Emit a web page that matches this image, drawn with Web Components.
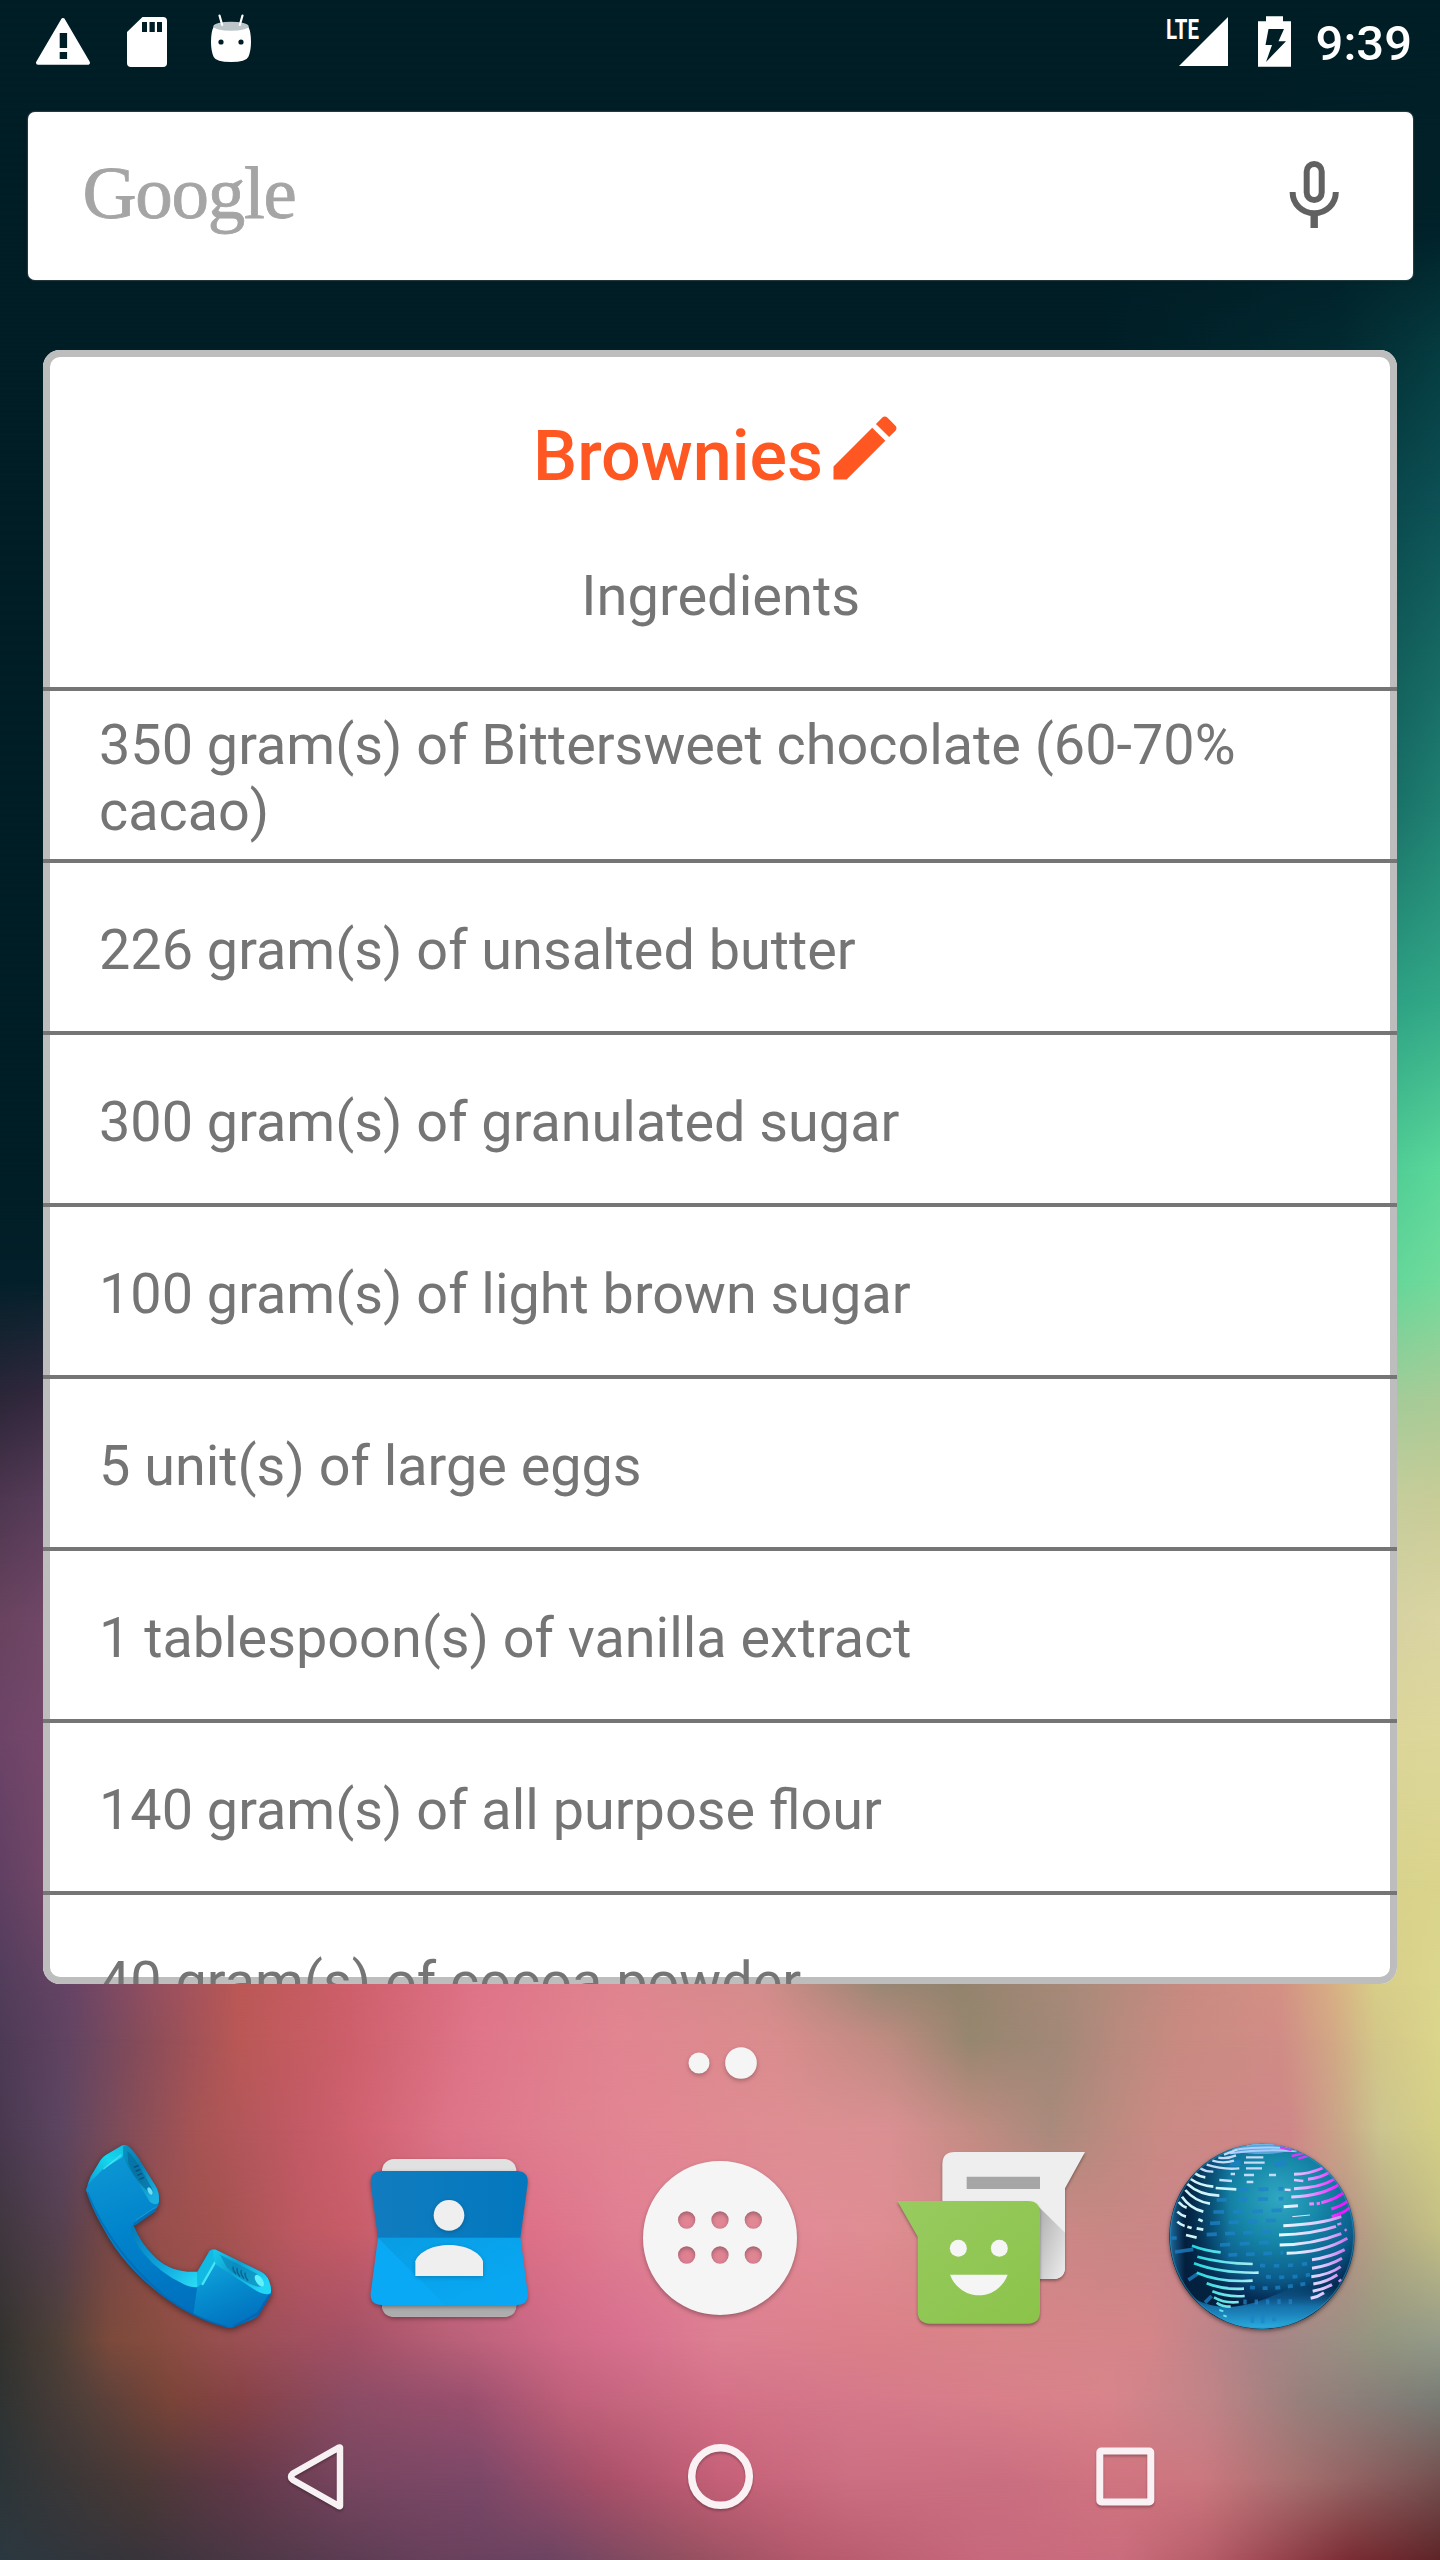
<!DOCTYPE html>
<html lang="en">
<head>
<meta charset="utf-8">
<title>Home screen</title>
<style>
html,body{margin:0;padding:0}
body{width:1440px;height:2560px;overflow:hidden;background:#001e26;font-family:Roboto,"Liberation Sans",sans-serif}
</style>
</head>
<body>
<home-screen></home-screen>
<script>
const define = (name, html, setup) => {
  const tpl = document.createElement('template');
  tpl.innerHTML = html;
  customElements.define(name, class extends HTMLElement {
    constructor() {
      super();
      const root = this.attachShadow({ mode: 'open' });
      root.append(tpl.content.cloneNode(true));
      if (setup) setup(root, this);
    }
  });
};

// Wallpaper: horizontal colour ramps, each fading in over the one above it.
const ramps = [
  [0, '#001e26 0,#001e26 1440px'],
  [230, '#001e26 0,#001e26 1250px,#01222a 1440px'],
  [350, '#001e26 0,#001e26 1100px,#022a31 1340px,#053c40 1440px'],
  [500, '#001e26 0,#001e26 900px,#0a4a4e 1400px,#0d5055 1440px'],
  [800, '#001e26 0,#001e26 400px,#1a7268 1400px,#1f7f71 1440px'],
  [1000, '#001e26 0,#001e26 400px,#2ea284 1400px,#32a887 1440px'],
  [1170, '#001e26 0,#001e26 400px,#52cf96 1400px,#5ad89a 1440px'],
  [1280, '#03202a 0,#03202a 400px,#66d79a 1400px,#70db9b 1440px'],
  [1400, '#2d2639 0,#35293f 43px,#a5cb98 1400px,#a9cb96 1440px'],
  [1500, '#4e3750 0,#573c59 43px,#c6cd9b 1400px,#c8cc97 1440px'],
  [1620, '#69435f 0,#704767 43px,#d8d2a2 1400px,#dad5a3 1440px'],
  [1740, '#6d4468 0,#75486b 43px,#dcd699 1400px,#ddd79a 1440px'],
  [1880, '#604063 0,#704667 43px,#d8d38c 1400px,#dad48d 1440px'],
  [1984, '#523d5b 0,#674466 70px,#934f60 150px,#bb5856 240px,#ce5f6b 350px,#df7388 475px,#e08490 620px,#d48d8b 760px,#9a8774 880px,#93836d 960px,#ad8b7b 1090px,#c98a82 1190px,#d49184 1280px,#d8b184 1335px,#d8cd88 1375px,#dbd68e 1440px'],
  [2040, '#4d3a55 0,#624462 70px,#8b4d59 150px,#ba5856 240px,#cd5f6b 350px,#df7589 475px,#e28591 620px,#d98d8d 780px,#bd8b80 890px,#96866f 970px,#a28878 1060px,#b98a7e 1120px,#c98a82 1180px,#d08c86 1280px,#d2a985 1335px,#d3c688 1375px,#dbd58b 1440px'],
  [2130, '#493850 0,#5c4560 60px,#844d58 130px,#a85454 200px,#c25a65 300px,#d16271 360px,#dd7488 450px,#e08090 560px,#e38693 640px,#dd8f92 810px,#da9092 890px,#c08c82 980px,#a98a7c 1050px,#bc8a80 1110px,#ca8a84 1160px,#cf8788 1290px,#c9a987 1345px,#cbc48f 1380px,#d4cf86 1440px'],
  [2230, '#40373f 0,#554050 60px,#714648 100px,#984f4c 160px,#a35250 220px,#bd5962 300px,#c65c67 345px,#d26a80 450px,#de7289 540px,#e07f92 620px,#e18c96 820px,#df8d92 880px,#cf8887 1000px,#c88784 1110px,#cc8589 1200px,#ce8a88 1290px,#b99286 1345px,#b5aa84 1385px,#c4c084 1440px'],
  [2340, '#33322f 0,#4f4038 60px,#7c4a3c 110px,#854c3e 150px,#984f4f 220px,#a14f5f 300px,#a35065 350px,#b86078 450px,#d06a88 560px,#d8708f 630px,#dd7f92 720px,#db8088 880px,#d88489 1000px,#d48588 1150px,#a88488 1265px,#939680 1380px,#949a88 1440px'],
  [2400, '#2f3332 0,#54403a 90px,#7a4438 170px,#864246 240px,#8b4c65 350px,#9a4f6e 470px,#c0607a 570px,#d37188 720px,#d5788a 850px,#d87f8a 1000px,#d8848c 1110px,#c08488 1210px,#98807c 1300px,#787c75 1440px'],
  [2480, '#2d3538 0,#4b3936 140px,#623848 240px,#784660 350px,#7c4868 480px,#a84f68 600px,#c56078 720px,#cc6f82 850px,#c96e80 1000px,#d07480 1110px,#cc7880 1200px,#a87070 1290px,#745050 1440px'],
  [2560, '#2b3840 0,#38343a 140px,#4f3848 260px,#68405c 430px,#6c4462 550px,#94505f 690px,#b4586c 800px,#c8687c 980px,#cb6c7c 1120px,#b55c68 1210px,#7a2c34 1350px,#5e2528 1440px']
];
define('wall-paper', `
<style>:host{display:block;position:absolute;inset:0;overflow:hidden;z-index:-1}div{position:absolute;left:0;right:0;bottom:0}</style>`,
  root => ramps.forEach(([y, stops], i) => {
    const d = document.createElement('div');
    const top = i ? ramps[i - 1][0] : 0;
    d.style.top = top + 'px';
    d.style.background = `linear-gradient(90deg,${stops})`;
    if (i) d.style.maskImage = `linear-gradient(180deg,transparent 0,#000 ${y - top}px)`;
    root.append(d);
  }));

define('status-bar', `
<style>
:host{display:flex;justify-content:space-between;height:84px;color:#fff}
div{display:flex}
svg{display:block}
.time{font-size:49px;font-weight:500;line-height:84px;padding:2px 28px 0 23px}
</style>
<div>
<svg width="270" height="84" viewBox="0 0 270 84">
 <path d="M63 20 88 62.7H38Z" fill="#fff" stroke="#fff" stroke-width="4" stroke-linejoin="round"/>
 <path d="M59.7 33h7.4v15h-7.4zM59.7 52h7.4v7h-7.4z" fill="#001e26"/>
 <path d="M142.500 17H163q4 0 4 4v42q0 4-4 4h-32q-4 0-4-4V32Z" fill="#fff"/>
 <path d="M142 22h5v10h-5zM149.500 22h5.300v10h-5.300zM157 22h5v10h-5z" fill="#001e26"/>
 <path d="M213.500 27Q231 33 248.500 27 251 32 251 42 251 51 248.300 57 246 62 231 62 216 62 213.700 57 211 51 211 42 211 32 213.500 27Z" fill="#fff"/>
 <ellipse cx="231" cy="26.200" rx="17.600" ry="4.500" fill="#bcc6c8"/>
 <path d="M219.500 15.500 222.200 25M242.500 15.500 239.800 25" stroke="#fff" stroke-width="2.200" stroke-linecap="round"/>
 <circle cx="221" cy="42" r="2.600" fill="#001e26"/><circle cx="241" cy="42" r="2.600" fill="#001e26"/>
</svg>
</div>
<div>
<svg width="130" height="84" viewBox="1162 0 130 84">
 <text x="1165" y="38.600" font-size="28.500" font-weight="700" textLength="33" lengthAdjust="spacingAndGlyphs" fill="#fff">LTE</text>
 <path d="M1178 66H1227V17Z" fill="#fff"/>
 <path d="M1257 21.300h8V16.300h17v5h8V66.700h-33Z" fill="#fff"/>
 <path d="M1267.500 29H1283l-5.500 12.300H1285L1265 62l6-17h-6.500Z" fill="#001e26"/>
</svg>
<span class="time">9:39</span>
</div>`);

define('search-bar', `
<style>
:host{display:flex;align-items:flex-start;justify-content:space-between;box-sizing:border-box;margin:27.500px 27.500px 0;height:168.500px;background:#fff;border-radius:7px;box-shadow:0 0 2px rgba(255,255,255,.5),0 1px 3px rgba(0,0,0,.3);padding:0 74px 0 55px}
.logo{font:75px/86px "Liberation Serif",serif;letter-spacing:-1.300px;color:#a5a5a5;-webkit-text-stroke:.8px #a5a5a5;margin-top:38px}
svg{display:block;margin-top:48.500px}
</style>
<span class="logo">Google</span>
<svg width="50" height="70" viewBox="1289 160 50 70" fill="none" stroke="#616161" stroke-width="6">
 <rect x="1306.700" y="164" width="15" height="36" rx="7.500"/>
 <path d="M1292.600 192C1292.600 204 1302.200 213.200 1314.200 213.200S1335.800 204 1335.800 192"/><path d="M1314.200 213v15" stroke-width="7.400"/>
</svg>`);

define('ingredient-row', `
<style>:host{display:flex;align-items:center;box-sizing:border-box;flex:none;height:172px;border-top:4px solid #757575;padding:6px 110px 0 56px;font-size:55.780px;line-height:66px;color:#757575}</style>
<span><slot></slot></span>`);

define('recipe-card', `
<style>
:host{display:flex;flex-direction:column;height:1634px;margin:70px 43px 0;overflow:hidden;border-radius:17px;background:#fff;box-shadow:inset 0 0 0 7px #bdbdbd}
header{display:flex;flex-direction:column;align-items:center;box-sizing:border-box;flex:none;height:337px;padding-top:56px}
.title{display:flex;height:91px;color:#ff5722;font-size:70px;font-weight:500;line-height:82px}
.title span{padding-top:9px}
svg{display:block}
.sub{margin:66px 0 0 1.500px;font-size:56px;line-height:66px;color:#757575}
</style>
<header>
 <div class="title"><span><slot name="title"></slot></span>
 <svg width="84" height="84" viewBox="0 0 24 24" fill="#ff5722"><path d="M3 17.250V21h3.750L17.810 9.940l-3.750-3.750L3 17.250zM20.710 7.040c.39-.39.39-1.020 0-1.410l-2.340-2.340c-.39-.39-1.020-.39-1.410 0l-1.830 1.830 3.750 3.750 1.830-1.830z"/></svg></div>
 <div class="sub"><slot name="subtitle"></slot></div>
</header>
<slot></slot>`);

define('page-dots', `
<style>:host{display:flex;justify-content:center;height:90px;margin-top:36px}svg{display:block;overflow:visible;filter:drop-shadow(0 2px 2px rgba(0,0,0,.25))}</style>
<svg width="200" height="90" viewBox="0 0 600 270" fill="#f5f5f5"><circle cx="237" cy="129" r="31.500"/><circle cx="363" cy="129" r="47.500"/></svg>`);

define('app-phone', `
<style>:host{display:block}svg{display:block;filter:drop-shadow(0 2px 3px rgba(0,0,0,.45))}</style>
<svg width="240" height="240" viewBox="0 0 720 720">
<defs>
<linearGradient id="b" x1="0" y1="0" x2=".35" y2="1"><stop offset="0" stop-color="#109bd6"/><stop offset=".5" stop-color="#0083cb"/><stop offset="1" stop-color="#006fbd"/></linearGradient>
<linearGradient id="t" x1="0" y1="1" x2="1" y2="0"><stop offset="0" stop-color="#0a9dd6"/><stop offset=".6" stop-color="#14d8ee"/><stop offset="1" stop-color="#12bce0"/></linearGradient>
<linearGradient id="e" x1="0" y1="0" x2=".7" y2="1"><stop offset="0" stop-color="#0796c4"/><stop offset=".45" stop-color="#077fb4"/><stop offset="1" stop-color="#1cb0e0"/></linearGradient>
<linearGradient id="n" x1="0" y1="0" x2="1" y2="1"><stop offset="0" stop-color="#0579b8"/><stop offset=".55" stop-color="#0fa5dd"/><stop offset="1" stop-color="#2be0f8"/></linearGradient>
<linearGradient id="f" x1="0" y1="0" x2="1" y2=".6"><stop offset="0" stop-color="#18cdec"/><stop offset=".45" stop-color="#0e9fd0"/><stop offset="1" stop-color="#22d6f6"/></linearGradient>
<linearGradient id="g" x1="0" y1="0" x2=".5" y2="1"><stop offset="0" stop-color="#14a8de"/><stop offset=".5" stop-color="#058cce"/><stop offset="1" stop-color="#0272bf"/></linearGradient>
</defs>
<path d="M78 240 92 200 122 150Q128 141 138 135L185 107Q196 102 206 110 220 122 235 145L288 230Q298 246 297 272 297 290 286 298L236 336 220 345Q240 400 290 447 340 490 412 485L448 424Q456 415 468 419L600 484Q620 494 627 512 636 535 633 555L598 612Q592 622 580 627L520 652Q510 656 498 652 400 625 310 560 190 470 130 355 95 295 78 240Z" fill="url(#b)"/>
<path d="M220 345Q240 400 290 447 340 490 412 485L418 530Q400 536 370 522 300 490 250 430 215 385 212 350Z" fill="url(#n)"/>
<path d="M82 226 92 200 122 150Q128 141 138 135L185 107 196 105 187 142 130 176Z" fill="url(#t)"/>
<path d="M130 178 184 134" stroke="#62e4f5" stroke-width="4" opacity=".7"/>
<path d="M190 108Q198 103 206 110 220 122 235 145L288 230Q298 246 297 276 290 290 270 276L205 172Q184 136 190 108Z" fill="url(#e)"/>
<path d="M202 122Q225 140 274 232 286 260 268 248 230 220 205 160Z" fill="#066d9e" opacity=".7"/>
<path d="M222 172l14-6M227 184l14-6M232 196l14-6M238 208l14-6" stroke="#054f7d" stroke-width="4"/>
<ellipse cx="270" cy="243" rx="6" ry="12" transform="rotate(-28 270 243)" fill="#6ce0f6"/>
<path d="M224 342 284 300" stroke="#0570b4" stroke-width="9" stroke-linecap="round"/>
<path d="M228 330 286 292" stroke="#1c9ad6" stroke-width="3"/>
<path d="M412 530 464 458 628 552 580 627 520 652Q450 640 400 612Z" fill="url(#g)"/>
<path d="M412 530Q410 505 412 485L448 424Q456 415 468 419L466 456 430 520Z" fill="#12b9e3"/>
<path d="M466 456 428 522" stroke="#45e6f7" stroke-width="7" stroke-linecap="round"/>
<path d="M460 420Q466 417 474 422L600 484Q620 494 627 512 636 535 632 550 620 558 590 543L470 466Q458 450 460 420Z" fill="url(#f)"/>
<path d="M480 434 588 490Q612 510 604 530 570 534 500 472Z" fill="#0a7fb4" opacity=".6"/>
<path d="M520 470q-4 8 8 22M532 474q-4 10 8 26M544 480q-4 10 8 26M556 488q-4 8 8 24" fill="none" stroke="#07618c" stroke-width="4"/>
<ellipse cx="598" cy="512" rx="10" ry="20" transform="rotate(-35 598 512)" fill="#62f0fb"/>
<path d="M628 556 594 610 520 650" fill="none" stroke="#0661ad" stroke-width="7" opacity=".7"/>
<path d="M82 248Q150 420 310 556 400 625 500 650" fill="none" stroke="#0664ae" stroke-width="6" opacity=".6"/>
</svg>`);

define('app-contacts', `
<style>:host{display:block}svg{display:block;overflow:visible}.s{filter:drop-shadow(0 6px 6px rgba(0,0,0,.35))}</style>
<svg width="220" height="240" viewBox="0 -60 660 720">
<defs><linearGradient id="a"><stop offset="0" stop-color="#117cbf"/><stop offset="1" stop-color="#0378be"/></linearGradient>
<linearGradient id="c" x1="0" y1="0" x2="1" y2="1"><stop offset="0" stop-color="#089ce2"/><stop offset="1" stop-color="#07a5ef" stop-opacity=".3"/></linearGradient></defs>
<rect class="s" x="126" y="87" width="403" height="473" rx="36" fill="#e1e1e1"/>
<path d="M126 500H529V524Q529 560 493 560H162Q126 560 126 524Z" fill="#adadad"/>
<g class="s">
<path d="M92 160Q90 123 126 123H530Q566 123 563 160L541 324H114Z" fill="url(#a)"/>
<path d="M114 323H541L563 490Q566 525 530 525H126Q90 525 92 490Z" fill="#0aa9f6"/></g>
<path d="M114 324H541L563 490Q566 525 530 525H315Z" fill="url(#c)"/>
<g fill="#efefef" style="filter:drop-shadow(0 4px 6px rgba(0,0,0,.2))"><circle cx="327" cy="256" r="46"/><path d="M226 438V394C236 365 280 345 327 345S419 365 429 394V438Z"/></g>
</svg>`);

define('app-drawer', `
<style>:host{display:block}svg{display:block;overflow:visible;filter:drop-shadow(0 2px 2px rgba(0,0,0,.3))}</style>
<svg width="200" height="240" viewBox="0 270 600 720">
<path fill="#f5f5f5" fill-rule="evenodd" d="M69 654a231 231 0 1 0 462 0a231 231 0 1 0-462 0ZM174 600a26 26 0 1 0 52 0a26 26 0 1 0-52 0ZM274 600a26 26 0 1 0 52 0a26 26 0 1 0-52 0ZM374 600a26 26 0 1 0 52 0a26 26 0 1 0-52 0ZM174 705a26 26 0 1 0 52 0a26 26 0 1 0-52 0ZM274 705a26 26 0 1 0 52 0a26 26 0 1 0-52 0ZM374 705a26 26 0 1 0 52 0a26 26 0 1 0-52 0Z"/>
</svg>`);

define('app-messenger', `
<style>:host{display:block}svg{display:block;overflow:visible}.s{filter:drop-shadow(0 6px 5px rgba(0,0,0,.35))}</style>
<svg width="230" height="240" viewBox="0 -30 690 720">
<defs><linearGradient id="g" x1="0" y1="0" x2="1" y2="1"><stop offset="0" stop-color="#98cb60"/><stop offset="1" stop-color="#8bc34a"/></linearGradient>
<linearGradient id="h" x1="0" y1="0" x2="1" y2="1"><stop offset="0" stop-color="#aaa"/><stop offset="1" stop-color="#eee"/></linearGradient></defs>
<path class="s" d="M187 133Q187 96 224 96H615L555 205V440Q555 477 518 477H187Z" fill="#eee"/>
<path d="M470 254 555 338V440Q555 477 518 477H470Z" fill="url(#h)"/>
<path d="M260 170H480V207H260Z" fill="#a6a6a6"/>
<path class="s" d="M52 243H444Q480 243 480 280V574Q480 611 444 611H150Q113 611 113 574V350Z" fill="url(#g)"/>
<circle cx="235" cy="385" r="25.500" fill="#f5f5f5"/><circle cx="358" cy="385" r="25.500" fill="#f5f5f5"/>
<path d="M210 464H383C368 503 335 526 297 526S225 503 210 464Z" fill="#f5f5f5"/>
</svg>`);

define('app-globe', `
<style>:host{display:block}svg{display:block;overflow:visible}.o{filter:drop-shadow(0 5px 6px rgba(0,0,0,.5))}</style>
<svg width="230" height="240" viewBox="0 -30 690 720" fill="none">
<defs>
<radialGradient id="o" cx="386" cy="235" r="350" gradientUnits="userSpaceOnUse"><stop offset="0" stop-color="#31a7c2"/><stop offset=".35" stop-color="#1688a9"/><stop offset=".68" stop-color="#0b5e8c"/><stop offset=".86" stop-color="#05305a"/><stop offset="1" stop-color="#021c38"/></radialGradient>
<linearGradient id="u" x1="0" y1="500" x2="0" y2="632" gradientUnits="userSpaceOnUse"><stop offset="0" stop-color="#1269a3" stop-opacity="0"/><stop offset=".45" stop-color="#1a80bd" stop-opacity=".85"/><stop offset="1" stop-color="#2cb4e6"/></linearGradient>
<linearGradient id="l" x1="60" x2="240" y1="0" y2="0" gradientUnits="userSpaceOnUse"><stop offset="0" stop-color="#1d6a9c"/><stop offset=".25" stop-color="#041f3d" stop-opacity=".95"/><stop offset="1" stop-color="#04304d" stop-opacity="0"/></linearGradient>
<linearGradient id="r" x1="390" x2="570" y1="0" y2="0" gradientUnits="userSpaceOnUse"><stop offset="0" stop-color="#e6eeff"/><stop offset=".45" stop-color="#e2a5ff"/><stop offset="1" stop-color="#f218ff"/></linearGradient>
<linearGradient id="q" x1="390" x2="600" y1="0" y2="0" gradientUnits="userSpaceOnUse"><stop offset="0" stop-color="#e8fbff"/><stop offset=".6" stop-color="#dccaff"/><stop offset="1" stop-color="#c66bea"/></linearGradient>
<linearGradient id="k" x1="130" x2="320" y1="0" y2="0" gradientUnits="userSpaceOnUse"><stop offset="0" stop-color="#1fd8e0"/><stop offset="1" stop-color="#b4edf4"/></linearGradient>
<clipPath id="p"><circle cx="336" cy="349" r="277"/></clipPath>
</defs>
<circle class="o" cx="336" cy="349" r="278" fill="url(#o)"/>
<g clip-path="url(#p)">
<rect x="50" y="60" width="200" height="580" fill="url(#l)"/>
<path d="M110 520Q200 590 336 540T575 420L620 640H100Z" fill="url(#u)"/>
<ellipse cx="336" cy="82" rx="95" ry="20" fill="#5ba5da"/>
<g stroke="#1e83c9" stroke-width="11" opacity=".75">
<path d="M200 240 400 236" stroke-dasharray="30 32"/><path d="M265 210 400 206" stroke-dasharray="30 30"/>
<path d="M190 276Q300 276 400 270" stroke-dasharray="32 26"/><path d="M180 310Q300 305 395 300" stroke-dasharray="30 26"/><path d="M170 344Q280 338 385 334" stroke-dasharray="30 24"/><path d="M210 375Q300 370 385 366" stroke-dasharray="30 28"/><path d="M235 405Q320 402 400 398" stroke-dasharray="26 26"/>
<path d="M330 436Q400 440 480 430" stroke-dasharray="16 26"/><path d="M348 470Q410 476 480 464" stroke-dasharray="15 25"/><path d="M300 502Q380 510 470 490" stroke-dasharray="15 23"/><path d="M280 546Q360 546 440 545" stroke-width="15" stroke-dasharray="10 24"/>
<path d="M75 396 130 388M115 480 142 462M165 548 185 528M65 354H80M307 588V608M338 584V610M372 592V604"/>
<path d="M240 130H272M373 134 408 128" stroke-width="18"/>
</g>
<g stroke="#a9cfff" stroke-width="6"><path d="M290 76Q340 68 400 76M262 88Q340 78 420 86M240 100Q340 86 440 94"/></g>
<path d="M370 72 400 76M390 82 425 90M425 108 460 100M445 116 480 106" stroke="#d43df5" stroke-width="7"/>
<g stroke="#c5daf7" stroke-width="7">
<path d="M222 104 262 88M205 113Q230 118 258 106M187 122Q220 132 252 122M170 134Q220 150 268 145M150 145Q168 156 190 155M288 112H340M282 128H344M288 145H336M282 165H312M357 165H378M290 186H310M242 162H255M208 180 246 183"/>
</g>
<g stroke="#cef4fa" stroke-width="8">
<path d="M135 160Q148 170 166 172M122 177Q150 197 190 200M197 204 259 208M112 192Q150 226 208 227M106 210Q135 244 180 251M96 230Q120 265 160 275M86 246Q98 260 110 263M82 275Q94 287 108 290M82 305Q92 315 104 318M145 298 158 304M140 325 160 329M108 345 140 353M112 320 125 324"/>
</g>
<g stroke="url(#k)" stroke-width="8">
<path d="M126 377Q165 392 212 397"/><path d="M142 410Q215 430 308 432"/><path d="M132 430Q210 460 326 458"/><path d="M140 458Q210 488 308 482"/><path d="M170 490Q220 510 282 506"/><path d="M187 514Q230 532 284 528"/><path d="M192 532Q225 551 266 546"/><path d="M200 548Q215 560 242 560"/><path d="M208 570 220 574M220 586 230 590" stroke-width="6"/>
</g>
<g stroke="url(#r)" stroke-width="9">
<path d="M432 163Q475 163 518 144"/><path d="M474 178Q512 174 538 157"/><path d="M432 180 460 183M404 209 422 210" stroke-width="7"/><path d="M432 206Q510 204 554 177"/><path d="M424 231Q520 228 572 190"/><path d="M478 252 492 251M500 251 510 250"/><path d="M514 248Q560 238 588 212"/><path d="M544 267Q580 256 596 240"/><path d="M545 290Q585 278 600 262"/>
</g>
<g stroke="url(#q)" stroke-width="9">
<path d="M401 260 444 257"/><path d="M427 290 480 285" stroke-width="3"/><path d="M400 317Q510 313 574 290"/><path d="M387 345Q490 342 558 319"/><path d="M389 375Q490 374 574 341"/><path d="M410 400Q520 398 592 355"/><path d="M486 419Q540 412 584 389"/><path d="M486 445Q540 437 576 415"/><path d="M484 470Q540 464 572 440"/><path d="M490 492Q530 486 562 464"/><path d="M488 514Q520 508 546 494"/><path d="M482 535Q505 530 522 518"/><path d="M562 314 574 310M584 332 590 328M566 485 574 478" stroke-width="7"/>
</g>
<circle cx="336" cy="349" r="275" stroke="#2a9ac4" stroke-width="4" opacity=".5"/>
</g>
</svg>`);

define('app-dock', `
<style>:host{display:flex;justify-content:space-between;height:240px;padding:0 60px}.side{display:flex;gap:40px}</style>
<div class="side"><app-phone></app-phone><app-contacts></app-contacts></div>
<app-drawer></app-drawer>
<div class="side"><app-messenger></app-messenger><app-globe></app-globe></div>`);

define('nav-bar', `
<style>:host{display:flex;justify-content:space-between;align-items:center;height:168px;margin-top:42px;padding:0 275px}svg{display:block;filter:drop-shadow(0 2px 1px rgba(0,0,0,.25))}</style>
<svg width="80" height="80" viewBox="0 0 80 80" fill="none" stroke="#f8f1f4" stroke-width="6.500" stroke-linejoin="round"><path d="M65 11.500V70Q64 70.500 63 69.500L18 44Q14 41 18 37.500L63 12Z"/></svg>
<svg width="80" height="80" viewBox="0 0 80 80" fill="none" stroke="#f9f1f4" stroke-width="7.500"><circle cx="40.500" cy="40.500" r="28.800"/></svg>
<svg width="80" height="80" viewBox="0 0 80 80" fill="none" stroke="#f9f1f4" stroke-width="7"><rect x="14.800" y="15" width="51" height="51" rx="1.500"/></svg>`);

define('home-screen', `
<style>:host{display:flex;flex-direction:column;position:relative;z-index:0;width:1440px;height:2560px;overflow:hidden}</style>
<wall-paper></wall-paper>
<status-bar></status-bar>
<search-bar></search-bar>
<recipe-card>
 <span slot="title">Brownies</span><span slot="subtitle">Ingredients</span>
 <ingredient-row>350 gram(s) of Bittersweet chocolate (60-70% cacao)</ingredient-row>
 <ingredient-row>226 gram(s) of unsalted butter</ingredient-row>
 <ingredient-row>300 gram(s) of granulated sugar</ingredient-row>
 <ingredient-row>100 gram(s) of light brown sugar</ingredient-row>
 <ingredient-row>5 unit(s) of large eggs</ingredient-row>
 <ingredient-row>1 tablespoon(s) of vanilla extract</ingredient-row>
 <ingredient-row>140 gram(s) of all purpose flour</ingredient-row>
 <ingredient-row>40 gram(s) of cocoa powder</ingredient-row>
</recipe-card>
<page-dots></page-dots>
<app-dock></app-dock>
<nav-bar></nav-bar>`);
</script>
</body>
</html>
